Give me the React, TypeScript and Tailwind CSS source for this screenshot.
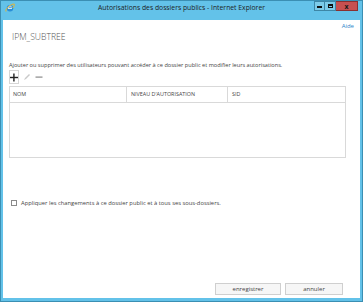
import React from "react";

const font = { fontFamily: '"Open Sans", "Noto Sans", sans-serif' };

function IEIcon() {
  return (
    <svg width="10" height="10" viewBox="0 0 20 20">
      <circle cx="10" cy="10.5" r="6.5" fill="#2a8fd8" />
      <rect x="6" y="9.5" width="8" height="2" fill="#fff" />
      <path d="M13 7.5 A4 4 0 0 0 6.2 9.5" stroke="#fff" strokeWidth="2" fill="none" />
      <path d="M2 17 C 0 14, 8 4, 17 2 C 20 1, 19 6, 15 10" stroke="#f0b323" strokeWidth="2" fill="none" />
    </svg>
  );
}

export default function App() {
  return (
    <div
      className="w-[363px] h-[302px] bg-[#63c2e9] border border-[#3b8fb3] flex flex-col overflow-hidden"
      style={font}
    >
      {/* title bar */}
      <div className="h-[19px] flex items-start shrink-0">
        <div className="pl-[4px] pt-[2px]">
          <IEIcon />
        </div>
        <div className="flex-1 pl-[34px] text-center text-[6.8px] leading-[14px] text-[#1e1e1e]">
          Autorisations des dossiers publics - Internet Explorer
        </div>
        <div className="flex mr-[4px]">
          <div className="w-[11px] h-[10px] bg-[#7ccbe9] border border-[#3d86a6] flex items-end justify-center pb-[2px]">
            <div className="w-[5px] h-[2px] bg-[#111]" />
          </div>
          <div className="w-[11px] h-[10px] bg-[#7ccbe9] border-y border-r border-[#3d86a6] flex items-center justify-center">
            <div className="w-[5px] h-[4px] border border-[#111] border-t-2" />
          </div>
          <div className="w-[22px] h-[10px] bg-[#c75050] border-y border-r border-[#8a3030] flex items-center justify-center text-[7px] font-bold leading-none text-[#1a1a1a]">
            x
          </div>
        </div>
      </div>

      {/* content */}
      <div className="flex-1 bg-white mx-[2px] mb-[3px] flex flex-col">
        <div className="flex justify-end pr-[6px] pt-[3px]">
          <span className="text-[6px] leading-[7px] text-[#2b84c9]">Aide</span>
        </div>
        <div className="pl-[9px] mt-[1px] text-[8.6px] leading-[12px] font-light text-[#555]">IPM_SUBTREE</div>

        <div className="pl-[6px] mt-[19px] text-[5.6px] leading-[7px] text-[#444]">
          Ajouter ou supprimer des utilisateurs pouvant accéder à ce dossier public et modifier leurs autorisations.
        </div>

        {/* toolbar */}
        <div className="flex items-center pl-[6px] mt-[1px] h-[14px] gap-[3px]">
          <div className="w-[10px] h-[14px] border border-[#d6d6d6] flex items-center justify-center">
            <svg width="9" height="9" viewBox="0 0 9 9">
              <rect x="3.6" y="0" width="1.6" height="9" fill="#222" />
              <rect x="0" y="3.7" width="9" height="1.6" fill="#222" />
            </svg>
          </div>
          <svg width="8" height="8" viewBox="0 0 8 8" className="ml-[1px]">
            <path d="M1 7 L2 5 L6 1 L7 2 L3 6 Z" fill="#c9c9c9" />
          </svg>
          <svg width="8" height="8" viewBox="0 0 8 8" className="ml-[1px]">
            <rect x="0.5" y="3.5" width="7" height="1.2" fill="#8a8a8a" />
          </svg>
        </div>

        {/* table */}
        <div className="ml-[6px] mr-[14px] mt-[2px] h-[72px] border border-[#d9d9d9] flex flex-col">
          <div className="h-[16px] border-b border-[#d9d9d9] flex text-[5.4px] text-[#444] leading-none">
            <div className="w-[117px] border-r border-[#d9d9d9] flex items-center pl-[3px]">NOM</div>
            <div className="w-[101px] border-r border-[#d9d9d9] flex items-center pl-[4px]">NIVEAU D'AUTORISATION</div>
            <div className="flex-1 flex items-center pl-[4px]">SID</div>
          </div>
          <div className="flex-1" />
        </div>

        {/* checkbox */}
        <div className="flex items-center pl-[8px] mt-[41px] gap-[4px]">
          <div className="w-[6px] h-[6px] border border-[#8a8a8a] bg-white" />
          <span className="text-[5.8px] leading-[8px] text-[#444]">
            Appliquer les changements à ce dossier public et à tous ses sous-dossiers.
          </span>
        </div>

        <div className="flex-1" />

        {/* buttons */}
        <div className="flex justify-end gap-[4px] pr-[17px] pb-[3px]">
          <div className="w-[66px] h-[12px] bg-[#f6f6f6] border border-[#cfcfcf] flex items-center justify-center text-[6px] leading-none text-[#444]">
            enregistrer
          </div>
          <div className="w-[58px] h-[12px] bg-[#f6f6f6] border border-[#cfcfcf] flex items-center justify-center text-[6px] leading-none text-[#444]">
            annuler
          </div>
        </div>
      </div>
    </div>
  );
}
